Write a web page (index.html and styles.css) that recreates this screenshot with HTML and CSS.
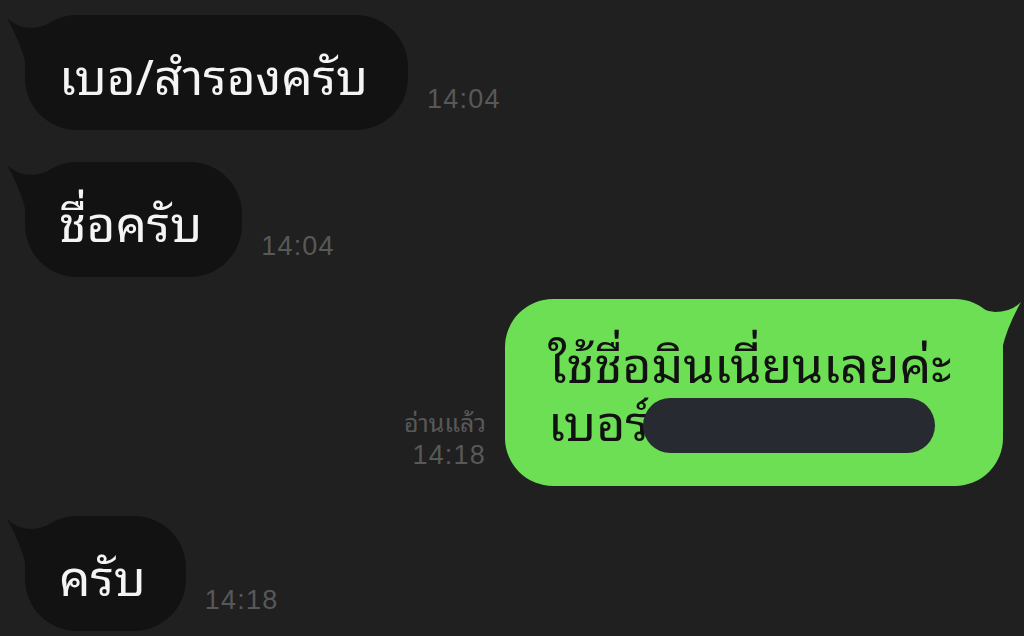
FILE: index.html
```html
<!DOCTYPE html>
<html lang="th">
<head>
  <meta charset="UTF-8">
  <meta name="viewport" content="width=device-width, initial-scale=1.0">
  <title>แชท</title>
  <link rel="stylesheet" href="styles.css">
</head>
<body>
  <main class="chat">
    <div class="row in">
      <div class="bubble">
        <svg class="tail" width="42" height="50" viewBox="0 0 42 50"><path d="M0 3 Q10 13 26 13 Q34 12 42 9 L42 50 L19 50 Q14 28 0 3 Z"/></svg>
        <span class="msg">เบอ/สำรองครับ</span>
      </div>
      <div class="meta"><span>14:04</span></div>
    </div>

    <div class="row in second">
      <div class="bubble">
        <svg class="tail" width="42" height="50" viewBox="0 0 42 50"><path d="M0 3 Q10 13 26 13 Q34 12 42 9 L42 50 L19 50 Q14 28 0 3 Z"/></svg>
        <span class="msg">ชื่อครับ</span>
      </div>
      <div class="meta"><span>14:04</span></div>
    </div>

    <div class="row out">
      <div class="meta">
        <span class="read">อ่านแล้ว</span>
        <span>14:18</span>
      </div>
      <div class="bubble green">
        <svg class="tail" width="42" height="50" viewBox="0 0 42 50"><path d="M42 3 Q32 13 16 13 Q8 12 0 9 L0 50 L23 50 Q28 28 42 3 Z"/></svg>
        <p class="msg">ใช้ชื่อมินเนี่ยนเลยค่ะ<br>เบอร์<span class="hide"></span></p>
      </div>
    </div>

    <div class="row in last">
      <div class="bubble">
        <svg class="tail" width="42" height="50" viewBox="0 0 42 50"><path d="M0 3 Q10 13 26 13 Q34 12 42 9 L42 50 L19 50 Q14 28 0 3 Z"/></svg>
        <span class="msg">ครับ</span>
      </div>
      <div class="meta"><span>14:18</span></div>
    </div>
  </main>
</body>
</html>
```

FILE: styles.css
```css
body {
  margin: 0;
  background-color: #202020;
  font-family: "Noto Sans Thai Looped", "Loma", "Garuda", "Sarabun", "Noto Serif Thai", "Noto Sans Thai", "Noto Sans", sans-serif;
  overflow: hidden;
}
.chat {
  display: flex;
  flex-direction: column;
  padding: 15px 21px 0 25px;
}
.row {
  display: flex;
  align-items: flex-end;
}
.row.second { margin-top: 32px; }
.row.out { margin-top: 22px; justify-content: flex-end; }
.row.last { margin-top: 30px; }

.bubble {
  position: relative;
  height: 115px;
  box-sizing: border-box;
  padding: 0 40px 0 34px;
  display: flex;
  align-items: center;
  background: #121212;
  border-radius: 52px;
  color: #f4f4f4;
}
.bubble .tail {
  position: absolute;
  top: 0;
  left: -18px;
  fill: #121212;
}
.msg {
  font-size: 49.5px;
  line-height: 58px;
  margin: 0;
}

.meta {
  display: flex;
  flex-direction: column;
  color: #585858;
  font-family: "Liberation Sans", Arial, sans-serif;
  font-size: 27px;
  line-height: 30px;
  letter-spacing: 1.2px;
  margin-left: 19px;
  padding-bottom: 16px;
}
.out .meta {
  margin: 0 19px 0 0;
  align-items: flex-end;
}
.meta .read {
  font-family: "Noto Sans Thai Looped", "Loma", "Garuda", "Sarabun", "Noto Sans Thai", sans-serif;
  font-size: 25px;
  line-height: 30px;
  margin-bottom: 4px;
  letter-spacing: 0;
}

.bubble.green {
  width: 498px;
  height: 187px;
  padding: 0 0 0 43px;
  border-radius: 48px;
  background: #6ddf55;
  color: #111;
}
.bubble.green .tail {
  left: auto;
  right: -18px;
  fill: #6ddf55;
}
.bubble.green .msg { font-size: 50px; }
.hide {
  display: inline-block;
  width: 292px;
  height: 55px;
  margin-left: -6px;
  vertical-align: -12px;
  background: #272a30;
  border-radius: 28px;
}
```
